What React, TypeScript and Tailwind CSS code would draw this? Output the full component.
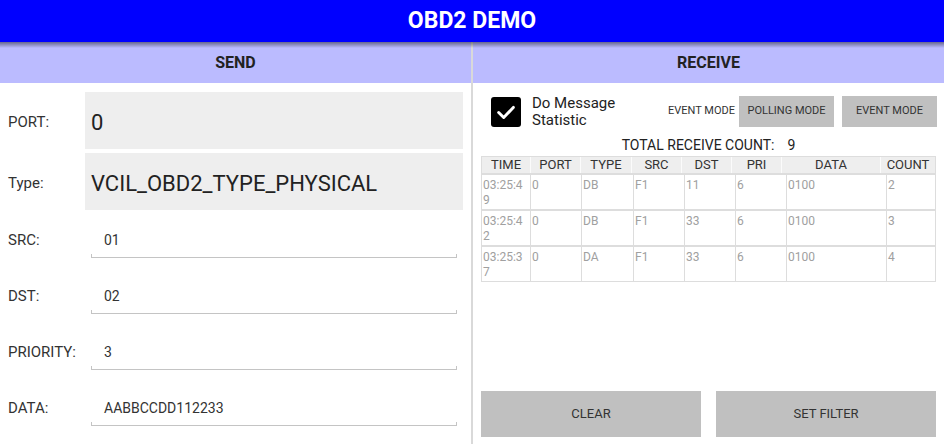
import React from 'react';

const cols = [
  { name: 'TIME', w: 'w-[48px]' },
  { name: 'PORT', w: 'w-[50px]' },
  { name: 'TYPE', w: 'w-[51px]' },
  { name: 'SRC', w: 'w-[50px]' },
  { name: 'DST', w: 'w-[50px]' },
  { name: 'PRI', w: 'w-[50px]' },
  { name: 'DATA', w: 'w-[99px]' },
  { name: 'COUNT', w: 'flex-1' },
];

const rows = [
  ['03:25:49', '0', 'DB', 'F1', '11', '6', '0100', '2'],
  ['03:25:42', '0', 'DB', 'F1', '33', '6', '0100', '3'],
  ['03:25:37', '0', 'DA', 'F1', '33', '6', '0100', '4'],
];

const BoxRow = ({ label, value }: { label: string; value: string }) => (
  <div className="flex items-center h-[57px]">
    <div className="w-[77px] text-[15px] text-[#333] pt-[3px]">{label}</div>
    <div className="flex-1 h-full bg-[#eeeeee] flex items-center pl-[6px] pt-[3px] text-[22px] text-[#222]">{value}</div>
  </div>
);

const EditRow = ({ label, value }: { label: string; value: string }) => (
  <div className="flex flex-col h-[56px]">
    <div className="flex items-center h-[20px] mt-[17px]">
      <div className="w-[83px] text-[15px] text-[#333]">{label}</div>
      <div className="pl-[13px] text-[14px] text-[#333]">{value}</div>
    </div>
    <div className="ml-[83px] mr-[6px] mt-[4px] h-[4px] border-b border-l border-r border-[#c4c4c4]" />
  </div>
);

export default function App() {
  return (
    <div className="w-[944px] h-[444px] flex flex-col bg-white font-['Roboto',sans-serif] overflow-hidden">
      {/* Title bar */}
      <div className="h-[42px] bg-[#0000ff] flex items-center justify-center text-white font-bold text-[23px]">
        OBD2 DEMO
      </div>

      <div className="flex-1 flex relative">
        <div className="absolute top-0 left-0 right-0 h-[6px] bg-gradient-to-b from-black/45 to-transparent" />

        {/* Send */}
        <div className="w-[471px] flex flex-col">
          <div className="h-[41px] bg-[#bbbbff] flex items-center justify-center font-bold text-[16px] text-[#222]">SEND</div>
          <div className="flex flex-col pl-[8px] pr-[8px] pt-[9px]">
            <BoxRow label="PORT:" value="0" />
            <div className="h-[4px]" />
            <BoxRow label="Type:" value="VCIL_OBD2_TYPE_PHYSICAL" />
            <div className="h-[3px]" />
            <EditRow label="SRC:" value="01" />
            <EditRow label="DST:" value="02" />
            <EditRow label="PRIORITY:" value="3" />
            <EditRow label="DATA:" value="AABBCCDD112233" />
          </div>
        </div>

        <div className="w-[2px] bg-[#d9d9d9]" />

        {/* Receive */}
        <div className="flex-1 flex flex-col">
          <div className="h-[41px] bg-[#bbbbff] flex items-center justify-center font-bold text-[16px] text-[#222]">RECEIVE</div>

          <div className="flex items-center h-[31px] mt-[13px] pl-[18px] pr-[7px]">
            <div className="w-[30px] h-[30px] bg-black rounded-[3px] flex items-center justify-center">
              <svg width="22" height="22" viewBox="0 0 24 24" fill="none" stroke="white" strokeWidth="3.2" strokeLinecap="round" strokeLinejoin="round">
                <path d="M4 12.5l5.5 5.5L20 7" />
              </svg>
            </div>
            <div className="ml-[11px] text-[15px] leading-[17px] text-[#222]">
              Do Message<br />Statistic
            </div>
            <div className="ml-auto text-[11px] text-[#333] w-[71px] overflow-hidden whitespace-nowrap">EVENT MODE</div>
            <button className="w-[95px] h-[31px] bg-[#c0c0c0] text-[11px] text-[#333]">POLLING MODE</button>
            <button className="ml-[8px] w-[95px] h-[31px] bg-[#c0c0c0] text-[11px] text-[#333]">EVENT MODE</button>
          </div>

          <div className="mt-[9px] h-[18px] flex items-center justify-center text-[14px] text-[#222]">
            <span>TOTAL RECEIVE COUNT:</span>
            <span className="ml-[13px]">9</span>
          </div>

          <div className="mx-[8px] mt-[2px] border border-[#dddddd] bg-[#dddddd] flex flex-col gap-[2px]">
            <div className="flex bg-[#eeeeee] h-[16px]">
              {cols.map((c, i) => (
                <div
                  key={c.name}
                  className={`${c.w} text-center text-[13px] leading-[16px] text-[#333] ${i > 0 ? 'border-l border-[#fbfbfb]' : ''}`}
                >
                  {c.name}
                </div>
              ))}
            </div>
            {rows.map((r, ri) => (
              <div key={ri} className="flex gap-px h-[34px]">
                {r.map((v, i) => (
                  <div
                    key={i}
                    className={`${cols[i].w} ${i === 0 ? 'w-[47px] pr-[6px]' : ''} bg-white text-[12px] leading-[15px] text-[#a0a0a0] pl-px pt-[3px] break-all overflow-hidden`}
                  >
                    {v}
                  </div>
                ))}
              </div>
            ))}
          </div>

          <div className="mt-auto flex gap-[15px] px-[8px] pb-[7px]">
            <button className="flex-1 h-[46px] bg-[#c0c0c0] text-[13px] text-[#333]">CLEAR</button>
            <button className="flex-1 h-[46px] bg-[#c0c0c0] text-[13px] text-[#333]">SET FILTER</button>
          </div>
        </div>
      </div>
    </div>
  );
}
